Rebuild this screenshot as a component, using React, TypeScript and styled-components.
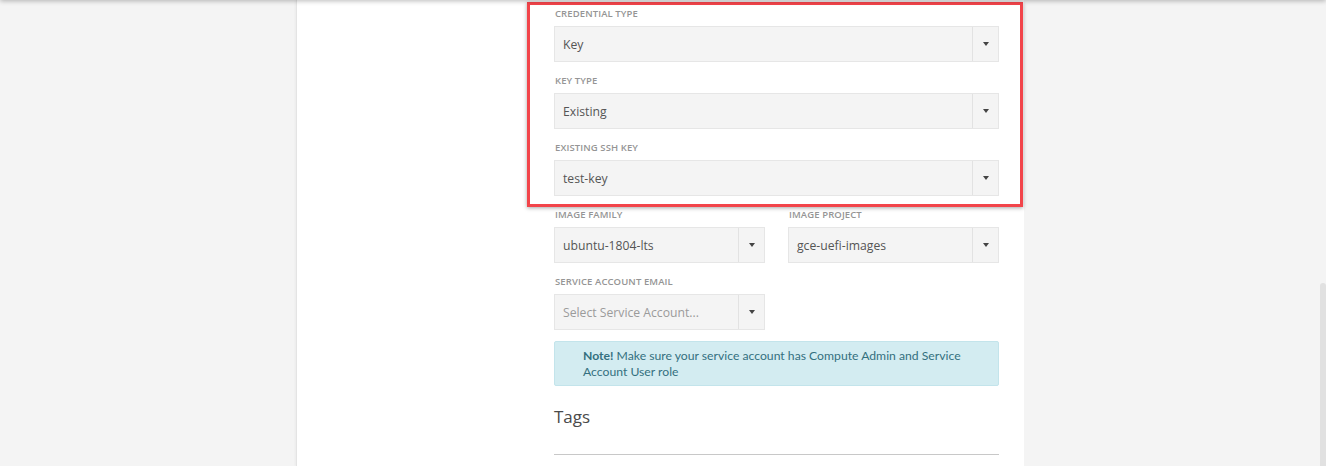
import React from "react";
import styled, { createGlobalStyle } from "styled-components";

const Global = createGlobalStyle`
  html, body { margin: 0; padding: 0; }
  body {
    background: #f4f4f4;
    font-family: "Open Sans", "Noto Sans", Arial, sans-serif;
    overflow: hidden;
  }
`;

const Page = styled.div`
  position: relative;
  min-height: 466px;
  padding-right: 6px;
  &::before {
    content: "";
    position: absolute;
    left: 0;
    right: 0;
    top: -6px;
    height: 6px;
    box-shadow: 0 1px 5px rgba(0, 0, 0, 0.28);
    z-index: 3;
  }
`;

const Scrollbar = styled.div`
  position: absolute;
  right: 0;
  top: 283px;
  bottom: 0;
  width: 6px;
  background: #e1e1e1;
  border-radius: 3px 3px 0 0;
`;

const Panel = styled.div`
  position: relative;
  width: 728px;
  min-height: 466px;
  margin: 0 auto;
  background: #fff;
  border-left: 1px solid #e4e4e4;
  box-shadow: -1px 0 2px rgba(0, 0, 0, 0.04);
  box-sizing: border-box;
  padding: 7px 25px 0 257px;
`;

const Highlight = styled.div`
  position: absolute;
  left: 230px;
  top: 2px;
  width: 496px;
  height: 205px;
  border: 3px solid #f2444a;
  box-sizing: border-box;
  box-shadow: 0 1px 4px rgba(0, 0, 0, 0.35);
  pointer-events: none;
`;

const Form = styled.div`
  width: 445px;
`;

const Row = styled.div`
  display: grid;
  grid-template-columns: 211px 211px;
  column-gap: 23px;
`;

const Group = styled.div`
  margin-bottom: 12px;
`;

const Label = styled.div`
  font-size: 9.5px;
  line-height: 14px;
  height: 14px;
  font-weight: 600;
  color: #959595;
  text-transform: uppercase;
  letter-spacing: 0.1px;
  margin-bottom: 5px;
  padding-left: 1px;
`;

const Select = styled.div`
  display: flex;
  height: 36px;
  box-sizing: border-box;
  background: #f4f4f4;
  border: 1px solid #e6e6e6;
`;

const Value = styled.div<{ $placeholder?: boolean }>`
  flex: 1;
  display: flex;
  align-items: center;
  padding-left: 8px;
  font-size: 12.2px;
  color: ${(p) => (p.$placeholder ? "#9b9b9b" : "#555")};
`;

const Toggle = styled.div`
  width: 25px;
  border-left: 1px solid #e2e2e2;
  display: flex;
  align-items: center;
  justify-content: center;
`;

const Caret = styled.span`
  width: 0;
  height: 0;
  border-left: 3.5px solid transparent;
  border-right: 3.5px solid transparent;
  border-top: 4px solid #444;
`;

const Note = styled.div`
  margin-top: -1px;
  background: #d3ecf1;
  border: 1px solid #c3e4eb;
  border-radius: 2px;
  color: #33707f;
  font-family: Lato, "Open Sans", Arial, sans-serif;
  font-size: 12.2px;
  line-height: 15.5px;
  padding: 6px 28px 6px 28px;
`;

const Heading = styled.h3`
  margin: 19px 0 0 0;
  font-size: 17px;
  font-weight: 400;
  color: #4a4a4a;
  line-height: 24px;
`;

const Rule = styled.div`
  margin-top: 25px;
  height: 1px;
  background: #c8c8c8;
`;

type FieldProps = { label: string; value: string; placeholder?: boolean };

const Field = ({ label, value, placeholder }: FieldProps) => (
  <Group>
    <Label>{label}</Label>
    <Select>
      <Value $placeholder={placeholder}>{value}</Value>
      <Toggle>
        <Caret />
      </Toggle>
    </Select>
  </Group>
);

export default function App() {
  return (
    <>
      <Global />
      <Page>
        <Panel>
          <Form>
            <Field label="Credential Type" value="Key" />
            <Field label="Key Type" value="Existing" />
            <Field label="Existing SSH Key" value="test-key" />
            <Row>
              <Field label="Image Family" value="ubuntu-1804-lts" />
              <Field label="Image Project" value="gce-uefi-images" />
            </Row>
            <Row>
              <Field
                label="Service Account Email"
                value="Select Service Account..."
                placeholder
              />
            </Row>
            <Note>
              <b>Note!</b> Make sure your service account has Compute Admin and
              Service Account User role
            </Note>
            <Heading>Tags</Heading>
            <Rule />
          </Form>
          <Highlight />
        </Panel>
        <Scrollbar />
      </Page>
    </>
  );
}
